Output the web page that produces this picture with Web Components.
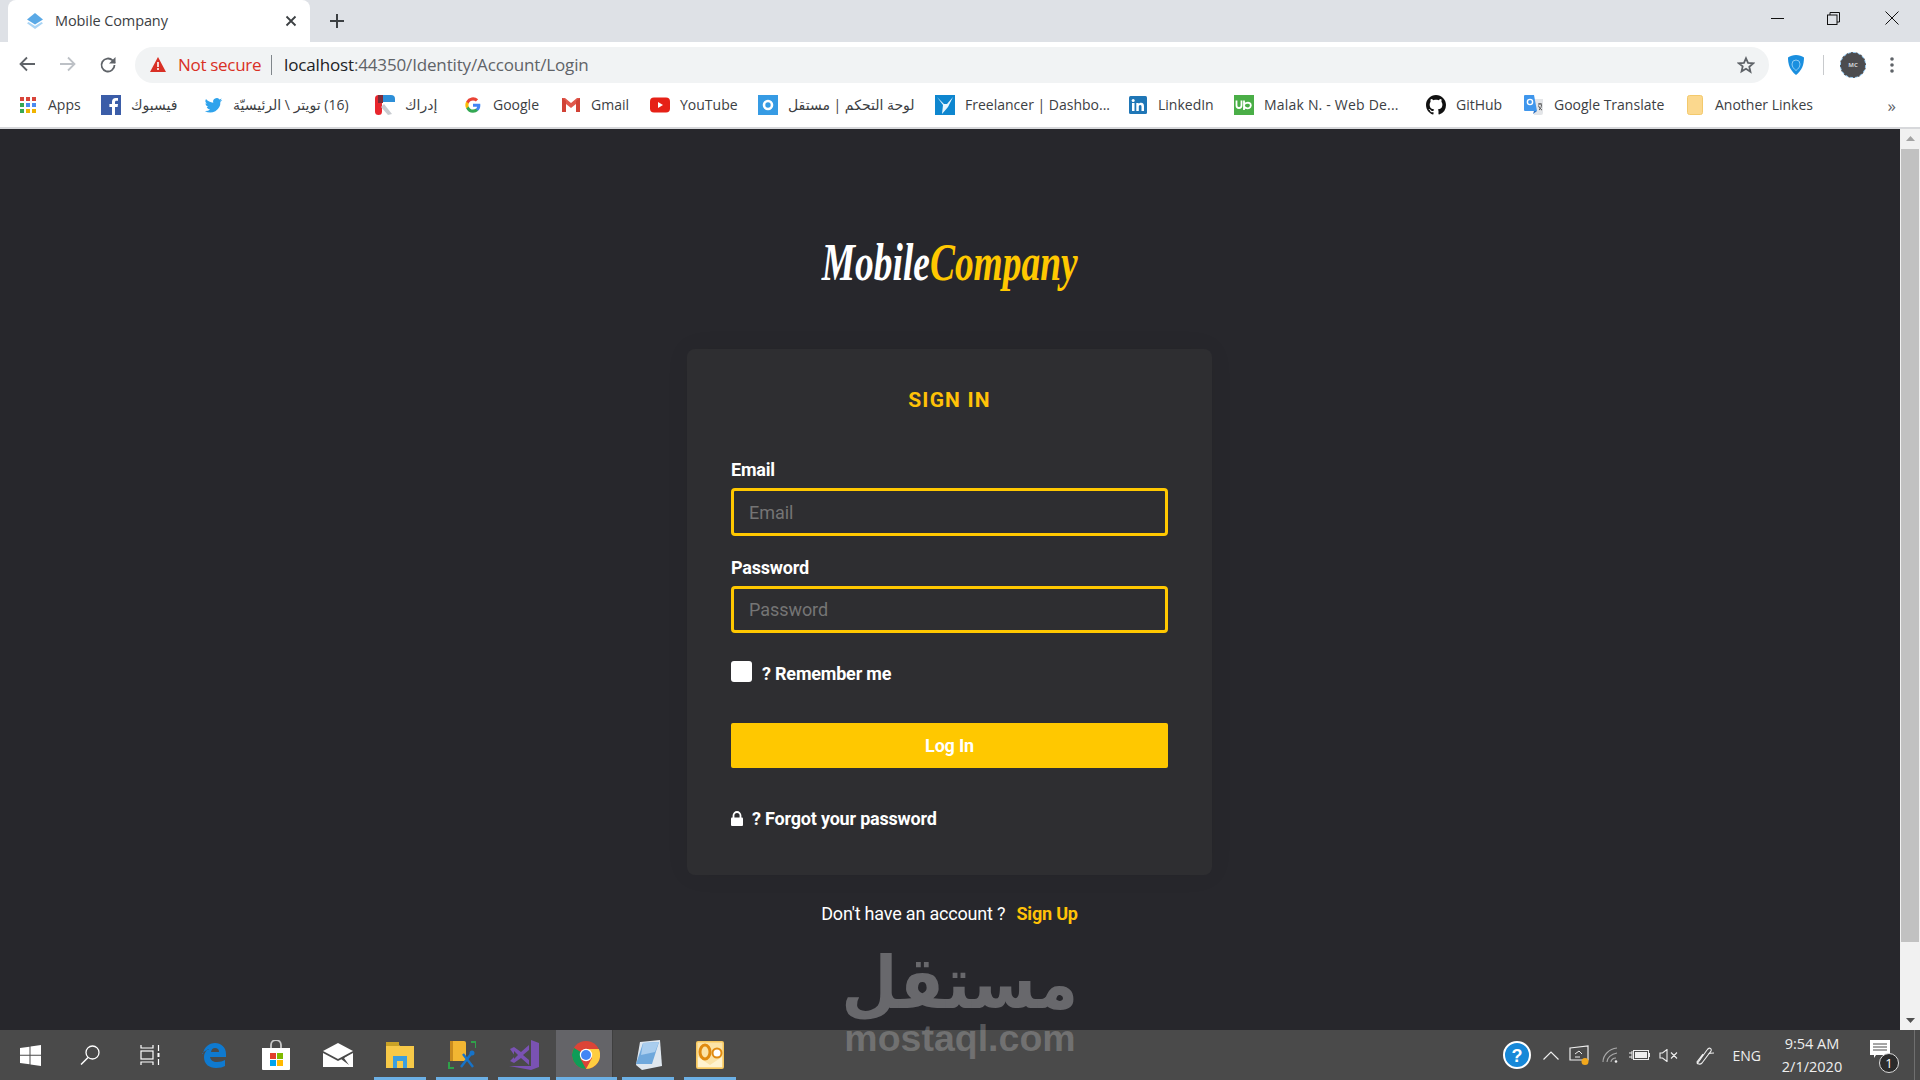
<!DOCTYPE html>
<html lang="en">
<head>
<meta charset="utf-8">
<title>Mobile Company</title>
<style>
    html, body { margin: 0; padding: 0; width: 1920px; height: 1080px; overflow: hidden; background: #27272c; }
    body { display: flex; flex-direction: column; position: relative; font-family: 'Noto Sans', 'DejaVu Sans', sans-serif; }
</style>
</head>
<body>

<tab-strip title-text="Mobile Company"></tab-strip>
<nav-toolbar></nav-toolbar>
<bookmark-bar>
    <bookmark-item icon="apps" w="83">Apps</bookmark-item>
    <bookmark-item icon="facebook" w="102" rtl>فيسبوك</bookmark-item>
    <bookmark-item icon="twitter" w="172" rtl>(16) تويتر \ الرئيسيّة</bookmark-item>
    <bookmark-item icon="idrak" w="88" rtl>إدراك</bookmark-item>
    <bookmark-item icon="google" w="98">Google</bookmark-item>
    <bookmark-item icon="gmail" w="89">Gmail</bookmark-item>
    <bookmark-item icon="youtube" w="108">YouTube</bookmark-item>
    <bookmark-item icon="mostaql" w="177" rtl>لوحة التحكم | مستقل</bookmark-item>
    <bookmark-item icon="freelancer" w="193">Freelancer | Dashbo...</bookmark-item>
    <bookmark-item icon="linkedin" w="106">LinkedIn</bookmark-item>
    <bookmark-item icon="upwork" w="192" style="letter-spacing:.2px">Malak N. - Web De...</bookmark-item>
    <bookmark-item icon="github" w="98">GitHub</bookmark-item>
    <bookmark-item icon="translate" w="161">Google Translate</bookmark-item>
    <bookmark-item icon="folder" w="130">Another Linkes</bookmark-item>
</bookmark-bar>

<page-area>
    <login-page></login-page>
</page-area>

<task-bar></task-bar>
<mostaql-mark></mostaql-mark>

<script>
const ICONS = {
    favicon: `<svg viewBox="0 0 16 16" width="16" height="16"><path d="M8 0 16 6.500 8 11.500 0 6.500z" fill="#5aa9e6"/><path d="M1.500 9 8 13l6.500-4L16 10.200 8 16 0 10.200z" fill="#a8d4f5"/></svg>`,
    apps: `<svg viewBox="0 0 16 16" width="16" height="16"><g>
        <rect x="0" y="0" width="4" height="4" fill="#d9453a"/><rect x="6" y="0" width="4" height="4" fill="#d9453a"/><rect x="12" y="0" width="4" height="4" fill="#d9453a"/>
        <rect x="0" y="6" width="4" height="4" fill="#37a853"/><rect x="6" y="6" width="4" height="4" fill="#4c8bf0"/><rect x="12" y="6" width="4" height="4" fill="#4c8bf0"/>
        <rect x="0" y="12" width="4" height="4" fill="#37a853"/><rect x="6" y="12" width="4" height="4" fill="#f0b400"/><rect x="12" y="12" width="4" height="4" fill="#f0b400"/></g></svg>`,
    facebook: `<svg viewBox="0 0 20 20" width="20" height="20"><rect width="20" height="20" fill="#3b5da8"/><path d="M14 20v-8h2.600l.4-3h-3V7.200c0-.9.3-1.500 1.500-1.500H17V3.100C16.700 3 15.800 3 14.700 3 12.400 3 11 4.300 11 6.800V9H8.400v3H11v8z" fill="#fff"/></svg>`,
    twitter: `<svg viewBox="0 0 24 24" width="19" height="19"><path d="M23 5.100c-.8.4-1.700.6-2.600.7.900-.6 1.700-1.500 2-2.500-.9.500-1.900.9-2.900 1.100a4.500 4.500 0 0 0-7.800 4.100C8 8.300 4.700 6.500 2.500 3.800a4.500 4.500 0 0 0 1.400 6c-.7 0-1.400-.2-2-.6 0 2.200 1.500 4.100 3.600 4.500-.7.200-1.300.2-2 .1.600 1.800 2.300 3.100 4.200 3.100A9 9 0 0 1 1 18.800 12.800 12.800 0 0 0 20.700 7.400c.9-.6 1.700-1.400 2.300-2.300z" fill="#2fa3ec"/></svg>`,
    idrak: `<svg viewBox="0 0 20 20" width="20" height="20"><rect x="0" y="0" width="7" height="20" rx="3.500" fill="#e8262d"/><path d="M4 0h12a4 4 0 0 1 4 4v3H8a4 4 0 0 1-4-4z" fill="#2d8fd8"/><rect x="3" y="0" width="5" height="8" fill="#7c2b38"/><path d="M9 9l8 10-4 1-7-8z" fill="#c8cbd0"/></svg>`,
    google: `<svg viewBox="0 0 24 24" width="16" height="16"><path d="M23 12.300c0-.8-.1-1.600-.2-2.300H12v4.500h6.200a5.300 5.300 0 0 1-2.300 3.400v2.900h3.700c2.200-2 3.400-5 3.400-8.500z" fill="#4285f4"/><path d="M12 23.500c3.100 0 5.700-1 7.600-2.800l-3.700-2.900c-1 .7-2.300 1.100-3.900 1.100-3 0-5.500-2-6.400-4.800H1.800v3a11.500 11.500 0 0 0 10.200 6.400z" fill="#34a853"/><path d="M5.600 14.100a6.900 6.900 0 0 1 0-4.400v-3H1.800a11.500 11.500 0 0 0 0 10.400z" fill="#fbbc05"/><path d="M12 5.100c1.700 0 3.200.6 4.400 1.700l3.300-3.300A11.500 11.500 0 0 0 1.800 6.700l3.800 3c.9-2.700 3.400-4.600 6.400-4.600z" fill="#ea4335"/></svg>`,
    gmail: `<svg viewBox="0 0 18 16" width="18" height="16"><path d="M0 1v14h4V7l5 4 5-4v8h4V1h-3L9 6 3 1z" fill="#e0584c"/><path d="M0 1l4 3v11H0zM18 1l-4 3v11h4z" fill="#d14236"/></svg>`,
    youtube: `<svg viewBox="0 0 20 16" width="20" height="16"><rect width="20" height="15" y=".5" rx="4" fill="#e62117"/><path d="M8 5l5 3-5 3z" fill="#fff"/></svg>`,
    mostaql: `<svg viewBox="0 0 20 20" width="20" height="20"><rect width="20" height="20" fill="#369be4"/><circle cx="10" cy="10" r="4" fill="none" stroke="#fff" stroke-width="2.600"/></svg>`,
    freelancer: `<svg viewBox="0 0 20 20" width="20" height="20"><rect width="20" height="20" fill="#0e86cf"/><path d="M2 2l7 7 3 0 6-7-5 10-6 7 1-9z" fill="#e6f5fd"/></svg>`,
    linkedin: `<svg viewBox="0 0 18 18" width="18" height="18"><rect width="18" height="18" rx="1.500" fill="#1f76b6"/><rect x="3" y="7" width="2.500" height="8" fill="#fff"/><circle cx="4.200" cy="4.600" r="1.500" fill="#fff"/><path d="M7.300 7h2.400v1.100c.5-.8 1.300-1.300 2.400-1.300 2.100 0 2.900 1.300 2.900 3.500V15h-2.500v-4.200c0-1-.3-1.800-1.300-1.800s-1.400.8-1.400 1.800V15H7.300z" fill="#fff"/></svg>`,
    upwork: `<svg viewBox="0 0 20 20" width="20" height="20"><rect width="20" height="20" fill="#4aae47"/><path d="M2.500 5.500v5a2.500 2.500 0 0 0 5 0v-5M10 15V5.500M10 10.500c0-3 5.500-3.500 6.500-1.500s-.5 4.500-3 4.300-3.500-1-3.500-2.800" fill="none" stroke="#fff" stroke-width="1.800"/></svg>`,
    github: `<svg viewBox="0 0 16 16" width="20" height="20"><path fill-rule="evenodd" fill="#111" d="M8 0C3.580 0 0 3.580 0 8c0 3.540 2.290 6.530 5.470 7.590.4.070.55-.17.55-.38 0-.19-.01-.82-.01-1.490-2.010.37-2.530-.49-2.690-.94-.09-.23-.48-.94-.82-1.130-.28-.15-.68-.52-.01-.53.630-.01 1.080.58 1.230.82.720 1.210 1.870.87 2.330.66.070-.52.280-.87.510-1.070-1.780-.2-3.640-.89-3.640-3.950 0-.87.310-1.590.820-2.150-.08-.2-.36-1.020.08-2.120 0 0 .670-.21 2.200.82.640-.18 1.320-.27 2-.27s1.360.09 2 .27c1.530-1.040 2.200-.82 2.200-.82.440 1.100.160 1.920.08 2.120.51.560.82 1.270.82 2.150 0 3.070-1.870 3.750-3.650 3.950.29.250.54.730.54 1.480 0 1.070-.01 1.930-.01 2.200 0 .21.150.46.550.38A8.010 8.010 0 0 0 16 8c0-4.420-3.580-8-8-8z"/></svg>`,
    translate: `<svg viewBox="0 0 20 20" width="20" height="20"><path d="M9 4h10v14a2 2 0 0 1-2 2h-7z" fill="#e3e5e8"/><path d="M1 0h9l3 16H1a1 1 0 0 1-1-1V1a1 1 0 0 1 1-1z" fill="#3f96ec"/><path d="M10 16l-1 3 4-3z" fill="#2a6fc0"/><path d="M14 9h4M16 8v1.500M15 15c1.500-1 2.500-3 2.500-5.500M14.500 10.500c.5 2 2 4 3.500 4.500" stroke="#555" stroke-width="1" fill="none"/><circle cx="6" cy="7" r="2.600" fill="none" stroke="#fff" stroke-width="1.400"/></svg>`,
    folder: `<svg viewBox="0 0 16 20" width="16" height="20"><rect x=".5" y=".5" width="15" height="19" rx="2" fill="#fbd88e" stroke="#f3c96c"/></svg>`,
    windows: `<svg viewBox="0 0 21 21" width="21" height="21"><path d="M0 3 9.500 1.700v8.100H0zM10.500 1.500 21 0v9.800H10.500zM0 10.800h9.500v8.500L0 18zM10.500 10.800H21V21l-10.500-1.500z" fill="#fff"/></svg>`,
    search: `<svg viewBox="0 0 20 20" width="20" height="20"><circle cx="12.500" cy="7.500" r="6.500" fill="none" stroke="#fff" stroke-width="1.300"/><path d="M8 12.500 1 19.500" stroke="#fff" stroke-width="1.500"/></svg>`,
    taskview: `<svg viewBox="0 0 20 20" width="20" height="20"><g fill="none" stroke="#fff" stroke-width="1.200"><rect x="1" y="6" width="12" height="8"/><path d="M1 0v3h12V0M1 20v-3h12v3M18.500 0v6M18.500 14v6"/></g><rect x="17.500" y="8" width="2" height="4" fill="#fff"/></svg>`,
    edge: `<svg viewBox="0 0 24 26" width="24" height="26"><path d="M1 12C2 5 7 1 13 1c6 0 11 4 11 11v3H8c.5 3 3 5 7 5 3 0 6-1 8-2v6c-2 1-5 2-9 2-7 0-12-4-12-11 0-3 1-5 3-7 1 0 1.500 0 2-1-2 1-5 2-7 5zM9 10h8c0-3-1.500-4-4-4s-3.500 1.500-4 4z" fill="#0f7ad0"/></svg>`,
    store: `<svg viewBox="0 0 30 30" width="30" height="30"><path d="M10 8V5a5 5 0 0 1 10 0v3" fill="none" stroke="#c9c9c9" stroke-width="1.800"/><path d="M1 8h28v21a1 1 0 0 1-1 1H2a1 1 0 0 1-1-1z" fill="#fff"/><rect x="9" y="13" width="6" height="6" fill="#e2402c"/><rect x="16" y="13" width="6" height="6" fill="#7fb900"/><rect x="9" y="20" width="6" height="6" fill="#00a4ef"/><rect x="16" y="20" width="6" height="6" fill="#ffb900"/></svg>`,
    mail: `<svg viewBox="0 0 30 24" width="30" height="24"><path d="M0 8 15 0l15 8-15 8z" fill="#fff"/><path d="M0 10v14h30V10L15 18z" fill="#fff"/><path d="M0 9l15 8 15-8-9 6 5 7-8-6-3 1z" fill="#4a4a4a"/></svg>`,
    explorer: `<svg viewBox="0 0 28 26" width="28" height="26"><path d="M0 2h12l2 2H28v22H0z" fill="#f7c948"/><rect y="0" width="13" height="4" fill="#c9a227"/><rect x="7" y="14" width="14" height="12" fill="#3b9ede"/><rect x="11" y="19" width="6" height="7" fill="#f7c948"/></svg>`,
    tools: `<svg viewBox="0 0 28 28" width="28" height="28"><rect x="2" y="0" width="16" height="20" rx="2" fill="#f2b632"/><rect x="2" y="0" width="3" height="20" fill="#c98c1f"/><path d="M23 1h5v6M0 27h6M1 21v6" fill="none" stroke="#2fa14a" stroke-width="2"/><path d="M13 26l10-13M25 26 15 13" stroke="#1673c9" stroke-width="2.400"/><circle cx="24" cy="12" r="2.500" fill="#1673c9"/></svg>`,
    vs: `<svg viewBox="0 0 30 30" width="30" height="30"><path d="M22 0l8 3v24l-8 3L0 26l22 0z" fill="#7a52b3"/><path d="M1 9l4-2 7 5 8-7v20l-8-7-7 5-4-2 5-5z" fill="#7a52b3"/><path d="M5 11v8l4-4zM20 10l-6 5 6 5z" fill="#4a4a4a"/></svg>`,
    chrome: `<svg viewBox="0 0 28 28" width="28" height="28"><circle cx="14" cy="14" r="14" fill="#db4437"/><path d="M14 14 2 21a14 14 0 0 1 0-14z" fill="#0f9d58"/><path d="M2 7l6 10 6 11A14 14 0 0 1 2 21z" fill="#0f9d58"/><path d="M14 8h12.800a14 14 0 0 1-12.800 20l6-11z" fill="#ffcd40"/><circle cx="14" cy="14" r="6.200" fill="#fff"/><circle cx="14" cy="14" r="5" fill="#4285f4"/></svg>`,
    notes: `<svg viewBox="0 0 28 30" width="28" height="30"><path d="M6 2 26 0 28 26 8 30 2 25z" fill="#dfe7ef"/><path d="M9 3 25 2l-7 22H2z" fill="#6fa8dc"/><path d="M9 3 25 2l-4 10-14 3z" fill="#a9cdee"/></svg>`,
    outlook: `<svg viewBox="0 0 28 28" width="28" height="28"><rect width="28" height="28" rx="2" fill="#f7c75c"/><rect x="1.500" y="1.500" width="25" height="25" fill="#fbe3a7"/><path d="M2 16 14 24l12-8v10H2z" fill="#fff3cf"/><ellipse cx="9" cy="11" rx="5" ry="7" fill="none" stroke="#e08a10" stroke-width="3"/><circle cx="21" cy="12" r="4.500" fill="#fff" stroke="#e08a10" stroke-width="2"/></svg>`
};

class AppIcon extends HTMLElement {
    constructor() {
        super();
        this.attachShadow({ mode: 'open' });
        const name = this.getAttribute('name');
        this.shadowRoot.innerHTML = `
            <style>
                :host { display: inline-flex; align-items: center; justify-content: center; flex: none; }
                svg { display: block; }
            </style>
            ${ICONS[name] || ''}
        `;
    }
}
customElements.define('app-icon', AppIcon);

class TabStrip extends HTMLElement {
    constructor() {
        super();
        this.attachShadow({ mode: 'open' });
        this.shadowRoot.innerHTML = `
            <style>
                :host { display: flex; height: 42px; background: #dee1e6; flex: none; padding-left: 8px; box-sizing: border-box; align-items: stretch; }
                .tab { width: 302px; background: #fff; border-radius: 8px 8px 0 0; display: flex; align-items: center; box-sizing: border-box; padding-left: 19px; }
                .title { margin: -2px 0 0 12px; width: 230px; font: 14.500px 'Open Sans', sans-serif; color: #3c4043; letter-spacing: -.1px; }
                .plus { margin-left: 20px; align-self: center; display: flex; }
                .win { margin-left: auto; display: flex; }
                .win button { height: 36px; border: 0; background: none; padding: 0; display: flex; align-items: center; justify-content: center; }
                svg { display: block; }
            </style>
            <div class="tab">
                <app-icon name="favicon"></app-icon>
                <span class="title">${this.getAttribute('title-text')}</span>
                <svg width="12" height="12" viewBox="0 0 12 12"><path d="M1.500 1.500l9 9M10.500 1.500l-9 9" stroke="#3c4043" stroke-width="1.800"/></svg>
            </div>
            <svg class="plus" width="14" height="14" viewBox="0 0 14 14"><path d="M7 0v14M0 7h14" stroke="#3c4043" stroke-width="2"/></svg>
            <div class="win">
                <button style="width:53px"><svg width="13" height="13" viewBox="0 0 13 13"><path d="M0 6.500h13" stroke="#111"/></svg></button>
                <button style="width:59px"><svg width="13" height="13" viewBox="0 0 13 13" fill="none" stroke="#111"><rect x=".5" y="3" width="9.500" height="9.500"/><path d="M3 3V.5h9.500V10H10"/></svg></button>
                <button style="width:57px"><svg width="14" height="14" viewBox="0 0 14 14"><path d="M.5.500l13 13M13.500.500l-13 13" stroke="#111"/></svg></button>
            </div>
        `;
    }
}
customElements.define('tab-strip', TabStrip);

class NavToolbar extends HTMLElement {
    constructor() {
        super();
        this.attachShadow({ mode: 'open' });
        this.shadowRoot.innerHTML = `
            <style>
                :host { display: flex; align-items: center; height: 44px; background: #fff; flex: none; padding-top: 1px; box-sizing: border-box; }
                svg { display: block; flex: none; }
                .btn { display: flex; justify-content: center; }
                .nav { display: flex; padding-left: 7px; width: 135px; box-sizing: border-box; }
                .omni { width: 1634px; height: 36px; border-radius: 18px; background: #f1f3f4; display: flex; align-items: center; box-sizing: border-box; padding-left: 15px; position: relative; }
                .warn { color: #d93025; font: 17px 'Open Sans', sans-serif; margin-left: 12px; letter-spacing: -.3px; width: 93px; white-space: nowrap; }
                .sep { width: 1px; height: 20px; background: #80868b; }
                .url { margin-left: 12px; font: 17px 'Open Sans', sans-serif; color: #5f6368; letter-spacing: -.15px; white-space: nowrap; }
                .url b { font-weight: 400; color: #202124; }
                .star { margin-left: auto; margin-right: 14px; }
                .right { display: flex; align-items: center; }
                .shield { margin-left: 19px; }
                .vsep { width: 1px; height: 20px; background: #c8cacd; margin: 0 16px 0 19px; }
                .avatar { width: 26px; height: 26px; border-radius: 50%; background: #4c4c4f; border: 1px dashed #8cc4ee; box-sizing: border-box; color: #cfd3d8; font: 700 6px 'Open Sans', sans-serif; display: flex; align-items: center; justify-content: center; }
                .dots { margin-left: 24px; }
            </style>
            <div class="nav">
                <div class="btn" style="width:40px"><svg width="16" height="16" viewBox="0 0 16 16"><path d="M16 8H2M8 1.500 1.500 8 8 14.500" fill="none" stroke="#5f6368" stroke-width="1.800"/></svg></div>
                <div class="btn" style="width:42px"><svg width="16" height="16" viewBox="0 0 16 16"><path d="M0 8h14M8 1.500 14.500 8 8 14.500" fill="none" stroke="#bdc1c6" stroke-width="1.800"/></svg></div>
                <div class="btn" style="width:38px"><svg width="18" height="18" viewBox="0 0 18 18"><path d="M15.500 9a6.500 6.500 0 1 1-1.900-4.600L16 6.800" fill="none" stroke="#5f6368" stroke-width="1.800"/><path d="M16.500 1v6.500H10z" fill="#5f6368"/></svg></div>
            </div>
            <div class="omni">
                <svg width="16" height="15" viewBox="0 0 16 15"><path d="M8 0l8 15H0z" fill="#d93025"/><path d="M7.200 5h1.600v5H7.200zM7.200 11h1.600v2H7.200z" fill="#fff"/></svg>
                <span class="warn">Not secure</span>
                <span class="sep"></span>
                <span class="url"><b>localhost</b>:44350/Identity/Account/Login</span>
                <svg class="star" width="18" height="18" viewBox="0 0 24 24"><path d="M12 3l2.700 6.200 6.800.6-5.100 4.500 1.500 6.700L12 17l-5.900 3.500 1.500-6.700L2.500 9.800l6.800-.6z" fill="none" stroke="#5f6368" stroke-width="2.400"/></svg>
            </div>
            <div class="right">
                <svg class="shield" width="16" height="20" viewBox="0 0 16 20"><path d="M8 0c3 0 6 1 8 2.500 0 7-2 13-8 17.500C2 15.500 0 9.500 0 2.500 2 1 5 0 8 0z" fill="#1a8fdf"/><path d="M8 5a4 4 0 0 1 4 4c0 3-2 5-4 6.500C6 14 4 12 4 9a4 4 0 0 1 4-4z" fill="none" stroke="#8fcdf5" stroke-width="1"/></svg>
                <span class="vsep"></span>
                <span class="avatar">MC</span>
                <svg class="dots" width="4" height="16" viewBox="0 0 4 16"><circle cx="2" cy="2" r="1.800" fill="#5f6368"/><circle cx="2" cy="8" r="1.800" fill="#5f6368"/><circle cx="2" cy="14" r="1.800" fill="#5f6368"/></svg>
            </div>
        `;
    }
}
customElements.define('nav-toolbar', NavToolbar);

class BookmarkBar extends HTMLElement {
    constructor() {
        super();
        this.attachShadow({ mode: 'open' });
        this.shadowRoot.innerHTML = `
            <style>
                :host { display: flex; align-items: center; height: 43px; background: #fff; border-bottom: 2px solid #d7d8db; flex: none; box-sizing: border-box; padding: 0 0 3px 18px; position: relative; }
                .more { margin-left: auto; margin-right: 24px; font: 17px 'Open Sans', sans-serif; color: #5f6368; }
            </style>
            <slot></slot>
            <span class="more">»</span>
        `;
    }
}
customElements.define('bookmark-bar', BookmarkBar);

class BookmarkItem extends HTMLElement {
    constructor() {
        super();
        this.attachShadow({ mode: 'open' });
        const w = this.getAttribute('w');
        const dir = this.hasAttribute('rtl') ? 'rtl' : 'ltr';
        this.shadowRoot.innerHTML = `
            <style>
                :host { display: flex; align-items: center; flex: none; width: ${w}px; font: 14px 'Open Sans', 'DejaVu Sans', sans-serif; color: #3c4043; white-space: nowrap; }
                app-icon { width: 20px; }
                span { margin: -2px 0 0 10px; }
            </style>
            <app-icon name="${this.getAttribute('icon')}"></app-icon>
            <span dir="${dir}"><slot></slot></span>
        `;
    }
}
customElements.define('bookmark-item', BookmarkItem);

class PageArea extends HTMLElement {
    constructor() {
        super();
        this.attachShadow({ mode: 'open' });
        this.shadowRoot.innerHTML = `
            <style>
                :host { display: flex; flex: 1; min-height: 0; background: #27272c; overflow: hidden; }
                .content { flex: 1; min-width: 0; overflow: hidden; }
                .scroll { width: 20px; background: #f1f1f1; flex: none; display: flex; flex-direction: column; align-items: center; box-sizing: border-box; padding-top: 7px; }
                .thumb { width: 18px; height: 793px; background: #c1c1c1; margin-top: 8px; }
                .down { margin-top: auto; margin-bottom: 7px; }
                svg { display: block; }
            </style>
            <div class="content"><slot></slot></div>
            <div class="scroll">
                <svg width="9" height="5" viewBox="0 0 9 5"><path d="M4.500 0 9 5H0z" fill="#a3a3a3"/></svg>
                <div class="thumb"></div>
                <svg class="down" width="9" height="5" viewBox="0 0 9 5"><path d="M4.500 5 9 0H0z" fill="#505050"/></svg>
            </div>
        `;
    }
}
customElements.define('page-area', PageArea);

class LoginPage extends HTMLElement {
    constructor() {
        super();
        this.attachShadow({ mode: 'open' });
        this.shadowRoot.innerHTML = `
            <style>
                :host { display: flex; flex-direction: column; align-items: center; font-family: Roboto, sans-serif; color: #fff; padding: 104px 1px 0 0; }
                .logo { height: 60px; font: italic 700 52px/60px 'Liberation Serif', serif; color: #fff; white-space: nowrap; transform: scaleX(.72); margin-bottom: 56px; }
                .logo span { color: #ffc800; }
                .signup { margin-top: 28px; font-size: 18px; line-height: 22px; letter-spacing: -.2px; }
                .signup a { color: #ffc107; font-weight: 700; margin-left: 7px; text-decoration: none; }
            </style>
            <div class="logo">Mobile<span>Company</span></div>
            <login-card></login-card>
            <div class="signup">Don't have an account ? <a href="#">Sign Up</a></div>
        `;
    }
}
customElements.define('login-page', LoginPage);

class LoginCard extends HTMLElement {
    constructor() {
        super();
        this.attachShadow({ mode: 'open' });
        this.shadowRoot.innerHTML = `
            <style>
                :host { display: block; width: 525px; height: 526px; box-sizing: border-box; padding: 39px 44px 0; background: #2e2e31; border-radius: 8px; box-shadow: 0 0 24px rgba(0,0,0,.06); }
                h2 { margin: 0 0 47px; text-align: center; color: #ffc107; font-size: 21px; line-height: 24px; font-weight: 700; letter-spacing: 1.150px; }
                form-field + form-field { margin-top: 21px; --input-h: 47px; }
                .remember { margin-top: 28px; display: flex; align-items: center; height: 21px; font-weight: 700; font-size: 18px; letter-spacing: -.2px; }
                .box { width: 21px; height: 21px; background: #fff; border-radius: 3px; margin-right: 10px; flex: none; }
                .remember span { position: relative; top: 2px; }
                button { display: block; width: 100%; height: 45px; margin-top: 41px; border: 0; border-radius: 2px; background: #ffc800; color: #fff; font: 700 18px Roboto, sans-serif; letter-spacing: -.2px; padding: 0; }
                .forgot { margin-top: 39px; height: 22px; display: flex; align-items: center; font-weight: 700; font-size: 18px; letter-spacing: -.2px; }
                .forgot svg { margin-right: 9px; display: block; }
            </style>
            <h2>SIGN IN</h2>
            <form-field label="Email"></form-field>
            <form-field label="Password"></form-field>
            <div class="remember"><div class="box"></div><span>? Remember me</span></div>
            <button type="button">Log In</button>
            <div class="forgot">
                <svg width="12" height="15" viewBox="0 0 12 15"><path d="M2.500 7V4.500a3.500 3.500 0 0 1 7 0V7" fill="none" stroke="#fff" stroke-width="1.800"/><rect y="6.500" width="12" height="8.500" rx="1" fill="#fff"/></svg>
                ? Forgot your password
            </div>
        `;
    }
}
customElements.define('login-card', LoginCard);

class FormField extends HTMLElement {
    constructor() {
        super();
        this.attachShadow({ mode: 'open' });
        const label = this.getAttribute('label');
        this.shadowRoot.innerHTML = `
            <style>
                :host { display: block; }
                label { display: block; font-size: 18px; line-height: 22px; font-weight: 700; letter-spacing: -.2px; margin-bottom: 7px; }
                input { display: block; width: 100%; height: var(--input-h, 48px); box-sizing: border-box; border: 3px solid #ffc800; border-radius: 4px; background: #2e2e31; padding: 0 15px; font: 18px Roboto, sans-serif; letter-spacing: -.05px; color: #fff; outline: 0; }
                input::placeholder { color: #757575; opacity: 1; }
            </style>
            <label>${label}</label>
            <input type="text" placeholder="${label}">
        `;
    }
}
customElements.define('form-field', FormField);

class TaskBar extends HTMLElement {
    constructor() {
        super();
        this.attachShadow({ mode: 'open' });
        const slots = [
            ['edge', 0, 0], ['store', 0, 0], ['mail', 0, 0], ['explorer', 1, 0],
            ['tools', 1, 0], ['vs', 1, 0], ['chrome', 1, 1], ['notes', 1, 0], ['outlook', 1, 0]
        ];
        this.shadowRoot.innerHTML = `
            <style>
                :host { display: flex; height: 50px; background: #4a4a4a; flex: none; align-items: stretch; color: #fff; font-family: 'Open Sans', sans-serif; }
                .fixed { width: 60px; display: flex; align-items: center; justify-content: center; }
                .apps { display: flex; margin-left: 3px; }
                .slot { width: 62px; display: flex; align-items: center; justify-content: center; position: relative; }
                .slot.run::after { content: ''; position: absolute; left: 5px; right: 5px; bottom: 0; height: 3px; background: #6cb0e5; }
                .slot.active { background: linear-gradient(to right, transparent 1px, #646468 1px, #646468 57px, #3f3f3f 57px, #3f3f3f 58px, transparent 58px); }
                .slot.active::after { left: 1px; right: 0; }
                .tray { margin-left: auto; display: flex; align-items: center; position: relative; }
                .tray > * { flex: none; }
                svg { display: block; }
                .eng { font-size: 14px; margin: 0 19px 0 18px; color: #eee; }
                .clock { width: 64px; font-size: 14.500px; line-height: 23px; text-align: center; color: #eee; white-space: nowrap; }
                .note { position: relative; margin: 0 30px 0 26px; width: 20px; height: 30px; }
                .badge { position: absolute; left: 9px; top: 13px; width: 20px; height: 20px; border-radius: 50%; background: #2b2b2b; border: 1px solid #ddd; box-sizing: border-box; font-size: 13px; line-height: 18px; text-align: center; }
            </style>
            <div class="fixed"><app-icon name="windows"></app-icon></div>
            <div class="fixed"><app-icon name="search"></app-icon></div>
            <div class="fixed"><app-icon name="taskview"></app-icon></div>
            <div class="apps">
                ${slots.map(([n, run, act]) => `<div class="slot${run ? ' run' : ''}${act ? ' active' : ''}"><app-icon name="${n}"></app-icon></div>`).join('')}
            </div>
            <div class="tray">
                <svg width="28" height="28" viewBox="0 0 28 28" style="margin-right:12px"><circle cx="14" cy="14" r="13" fill="#1788d8" stroke="#fff" stroke-width="2"/><text x="14" y="20.500" text-anchor="middle" font-family="'Liberation Sans'" font-weight="700" font-size="18" fill="#fff">?</text></svg>
                <svg width="16" height="9" viewBox="0 0 16 9" style="margin-right:10px"><path d="M.5 8.500 8 1l7.500 7.500" fill="none" stroke="#eee" stroke-width="1.200"/></svg>
                <svg width="20" height="20" viewBox="0 0 20 20" style="margin-right:13px"><path d="M1 3l18-2v14H1z" fill="none" stroke="#eee" stroke-width="1.200"/><path d="M6 9l4-3 3 3M6 12h5" fill="none" stroke="#eee"/><circle cx="16" cy="16.500" r="3.500" fill="#f2a81d"/></svg>
                <svg width="16" height="16" viewBox="0 0 16 16" style="margin-right:11px" fill="none" stroke="#aaa" stroke-width="1.100"><path d="M1 15C1 8 7 2 15 1M5 15c0-4 4-8 10-9M9 15c0-2 2-4 5-4"/><circle cx="14" cy="14.500" r="1.300" fill="#eee" stroke="none"/></svg>
                <svg width="21" height="12" viewBox="0 0 21 12" style="margin-right:9px"><rect x="4.500" y="1.500" width="15" height="9" fill="none" stroke="#eee"/><rect x="6" y="3" width="12" height="6" fill="#eee"/><path d="M0 4h3M0 8h3M3 2v8" stroke="#eee"/><rect x="20" y="4" width="1" height="4" fill="#eee"/></svg>
                <svg width="19" height="13" viewBox="0 0 19 13" fill="none" stroke="#eee" stroke-width="1.100" style="margin-right:17px"><path d="M1 4h2.500L8 .5v12L3.500 9H1zM12 3.500l6 6M18 3.500l-6 6"/></svg>
                <svg width="20" height="20" viewBox="0 0 20 20" fill="none" stroke="#eee" stroke-width="1.100"><path d="M2 19l10-14c2-3 5-2 4 1L7 18c-2 2-5 1-5-1l6-8M13 9c2-1 5-1 6-1"/></svg>
                <span class="eng">ENG</span>
                <div class="clock">9:54 AM<br>2/1/2020</div>
                <div class="note">
                    <svg width="20" height="18" viewBox="0 0 20 18"><path d="M0 0h20v15H6l-2 3v-3H0z" fill="#fff"/><path d="M3 4h14M3 7h14M3 10h14" stroke="#4a4a4a"/></svg>
                    <span class="badge">1</span>
                </div>
                <span style="position:absolute;right:5px;top:0;bottom:0;width:1px;background:#6f6f6f"></span>
            </div>
        `;
    }
}
customElements.define('task-bar', TaskBar);

class MostaqlMark extends HTMLElement {
    constructor() {
        super();
        this.attachShadow({ mode: 'open' });
        this.shadowRoot.innerHTML = `
            <style>
                :host { position: absolute; left: 845px; top: 939px; width: 230px; pointer-events: none; display: flex; flex-direction: column; align-items: center; }
                .ar { font: 700 72px/88px 'DejaVu Sans', sans-serif; color: #68686c; height: 77px; white-space: nowrap; transform: scaleX(.9); }
                .en { font: 700 37.500px/44px 'Liberation Sans', sans-serif; color: rgba(255,255,255,.22); white-space: nowrap; }
            </style>
            <div class="ar" dir="rtl">مستقل</div>
            <div class="en">mostaql.com</div>
        `;
    }
}
customElements.define('mostaql-mark', MostaqlMark);
</script>
</body>
</html>
